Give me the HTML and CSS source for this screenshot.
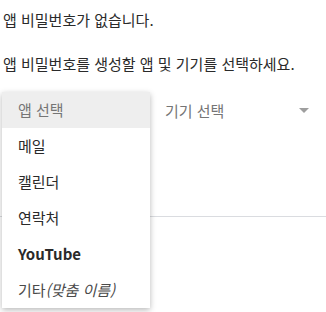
FILE: index.html
```html
<!DOCTYPE html>
<html lang="ko">
<head>
  <meta charset="UTF-8">
  <title>앱 비밀번호</title>
  <link rel="stylesheet" href="styles.css">
</head>
<body>

<div class="page">
  <p class="note">앱 비밀번호가 없습니다.</p>
  <p class="note">앱 비밀번호를 생성할 앱 및 기기를 선택하세요.</p>

  <div class="pickers">
    <div class="picker picker-app">
      <span class="picker-label">앱 선택</span>
      <ul class="menu">
        <li class="menu-item selected">앱 선택</li>
        <li class="menu-item">메일</li>
        <li class="menu-item">캘린더</li>
        <li class="menu-item">연락처</li>
        <li class="menu-item bold">YouTube</li>
        <li class="menu-item other">기타<em>(맞춤 이름)</em></li>
      </ul>
    </div>
    <div class="picker picker-device">
      <span class="picker-label">기기 선택</span>
      <span class="arrow"></span>
    </div>
  </div>

  <div class="divider"></div>
</div>

</body>
</html>
```

FILE: styles.css
```css
html, body {
  height: 100%;
}

body {
  margin: 0;
  background: #fff;
  font-family: "Noto Sans CJK KR", "Noto Sans", sans-serif;
  font-size: 15px;
  color: #2a2a2a;
}

.page {
  min-height: 312px;
  padding: 10px 0 0 3px;
  box-sizing: border-box;
}

.note {
  margin: 0 0 24px;
  line-height: 20px;
}

.pickers {
  display: flex;
  margin-top: -6px;
  height: 36px;
}

.picker {
  position: relative;
  display: flex;
  align-items: center;
  color: #757575;
}

.picker-app {
  width: 147px;
  padding-left: 15px;
  box-sizing: border-box;
}

.picker-device {
  flex: 1;
  padding-left: 15px;
  padding-right: 17px;
  justify-content: space-between;
}

.arrow {
  width: 0;
  height: 0;
  border-left: 5px solid transparent;
  border-right: 5px solid transparent;
  border-top: 5px solid #9e9e9e;
}

.menu {
  position: absolute;
  left: -1px;
  top: 0;
  width: 148px;
  margin: 0;
  padding: 0;
  list-style: none;
  background: #fff;
  box-shadow: 0 2px 6px rgba(0,0,0,0.28);
  z-index: 2;
}

.menu-item {
  height: 36px;
  line-height: 36px;
  padding-left: 16px;
  color: #2a2a2a;
}

.menu-item.selected {
  background: #eeeeee;
  color: #757575;
}

.menu-item.bold {
  font-weight: bold;
}

.menu-item.other {
  color: #4a4a4a;
}

.menu-item em {
  font-style: italic;
}

.divider {
  margin-top: 88px;
  margin-left: -3px;
  border-top: 1px solid #dadce0;
}
```
